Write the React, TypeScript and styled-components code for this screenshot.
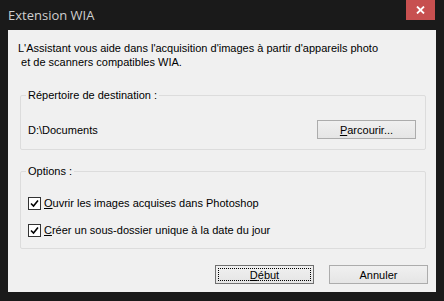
import React from "react";
import styled, { createGlobalStyle } from "styled-components";

const GlobalStyle = createGlobalStyle`
  html, body {
    margin: 0;
    padding: 0;
    background: #1a1a1a;
  }
  body {
    font-family: "Liberation Sans", Arial, sans-serif;
    font-size: 11px;
    color: #000;
  }
`;

const Window = styled.div`
  width: 444px;
  height: 301px;
  box-sizing: border-box;
  background: #1a1a1a;
  display: flex;
  flex-direction: column;
  padding: 0 8px 9px 8px;
`;

const TitleBar = styled.div`
  height: 30px;
  flex: none;
  display: flex;
  align-items: flex-start;
  justify-content: space-between;
`;

const Title = styled.div`
  font-family: "Open Sans", "Noto Sans", sans-serif;
  font-size: 13px;
  color: #cfcfcf;
  line-height: 30px;
`;

const CloseButton = styled.div`
  width: 29px;
  height: 20px;
  margin-right: 1px;
  background: #c75050;
  display: flex;
  align-items: center;
  justify-content: center;
`;

const Client = styled.div`
  flex: 1;
  background: #f0f0f0;
  display: flex;
  flex-direction: column;
  padding: 11px 8px 8px 10px;
`;

const Intro = styled.div`
  line-height: 14px;
  white-space: pre;
`;

const Group = styled.fieldset<{ $top: number }>`
  margin: ${(p) => p.$top}px 2px 0 2px;
  border: 1px solid #dcdcdc;
  border-radius: 2px;
  padding: 0 9px 10px 5px;
  min-width: 0;
`;

const Legend = styled.legend`
  padding: 0 2px;
  line-height: 13px;
`;

const PathRow = styled.div`
  margin-top: 18px;
  padding-left: 2px;
  display: flex;
  align-items: center;
  justify-content: space-between;
`;

const Button = styled.div<{ $focused?: boolean }>`
  box-sizing: border-box;
  width: 99px;
  height: 19px;
  border: 1px solid #acacac;
  background: linear-gradient(#f0f0f0, #e5e5e5);
  display: flex;
  align-items: center;
  justify-content: center;
  position: relative;
  ${(p) =>
    p.$focused &&
    `
    border-color: #707070;
    &::after {
      content: "";
      position: absolute;
      inset: 2px;
      border: 1px dotted #000;
    }
  `}
`;

const Options = styled.div`
  margin-top: 18px;
  display: flex;
  flex-direction: column;
  gap: 13px;
  padding-bottom: 1px;
`;

const CheckRow = styled.label`
  display: flex;
  align-items: center;
  gap: 3px;
  line-height: 14px;
  padding-left: 2px;
`;

const Box = styled.span`
  box-sizing: border-box;
  width: 13px;
  height: 13px;
  border: 1px solid #333;
  background: #fff;
  display: flex;
  align-items: center;
  justify-content: center;
`;

const Footer = styled.div`
  margin-top: auto;
  display: flex;
  justify-content: flex-end;
  gap: 15px;
`;

function Check({ children }: { children: React.ReactNode }) {
  return (
    <CheckRow>
      <Box>
        <svg width="9" height="9" viewBox="0 0 9 9">
          <path d="M1 4.5 L3.5 7 L8 1.5" fill="none" stroke="#000" strokeWidth="1.6" />
        </svg>
      </Box>
      <span>{children}</span>
    </CheckRow>
  );
}

export default function App() {
  return (
    <>
      <GlobalStyle />
      <Window>
        <TitleBar>
          <Title>Extension WIA</Title>
          <CloseButton>
            <svg width="9" height="8" viewBox="0 0 9 8">
              <path d="M1 0.5 L8 7.5 M8 0.5 L1 7.5" stroke="#fff" strokeWidth="1.8" />
            </svg>
          </CloseButton>
        </TitleBar>
        <Client>
          <Intro>
            {"L'Assistant vous aide dans l'acquisition d'images à partir d'appareils photo\n et de scanners compatibles WIA."}
          </Intro>
          <Group $top={20}>
            <Legend>Répertoire de destination :</Legend>
            <PathRow>
              <span>D:\Documents</span>
              <Button>
                <span>
                  <u>P</u>arcourir...
                </span>
              </Button>
            </PathRow>
          </Group>
          <Group $top={15}>
            <Legend>Options :</Legend>
            <Options>
              <Check>
                <u>O</u>uvrir les images acquises dans Photoshop
              </Check>
              <Check>
                <u>C</u>réer un sous-dossier unique à la date du jour
              </Check>
            </Options>
          </Group>
          <Footer>
            <Button $focused>
              <span>
                <u>D</u>ébut
              </span>
            </Button>
            <Button>Annuler</Button>
          </Footer>
        </Client>
      </Window>
    </>
  );
}
